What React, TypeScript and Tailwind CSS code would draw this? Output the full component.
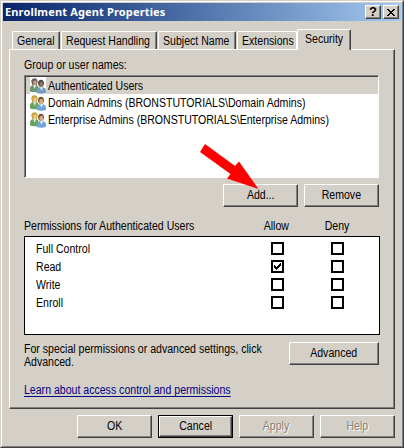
import type { ReactNode } from "react";

// Narrow interface lettering, squeezed from either the left edge or the middle.
function Text({ children, centered = false }: { children: ReactNode; centered?: boolean }) {
  return <span className={`inline-block scale-x-[.88] whitespace-nowrap ${centered ? "origin-center" : "origin-left"}`}>{children}</span>;
}

function Users({ gray = false }: { gray?: boolean }) {
  return (
    <svg width="16" height="17" viewBox="0 -1 16 17" className="shrink-0 bg-white">
      <path d="M0 13.5V10Q.3 7.4 3 7h3q2.3.6 2.6 3v3.5q-4 1.5-8.6 0Z" fill={gray ? "#6a9670" : "#65a35a"} />
      <path d="m3.2 7 1.5 4L6 7Z" fill="#eef3df" />
      <path d="M1.3 3.8Q1.3.4 4.6.2q3.2.2 3 4L6.8 7H2.3Z" fill={gray ? "#6d6462" : "#c5a43c"} />
      <ellipse cx="5" cy="4.8" rx="1.7" ry="2.4" fill={gray ? "#c59b88" : "#efc590"} />
      <path d="M6.5 15v-2.5Q7 9.6 9.3 9.3h4q2.3.5 2.6 3V15q-4.7 1.4-9.4 0Z" fill={gray ? "#7499c2" : "#72a4d6"} />
      <path d="m10 9.3 1.5 3.5L13 9.3Z" fill="#e9f3fa" />
      <ellipse cx="11" cy="5.3" rx="2.9" ry="3.5" fill={gray ? "#4c4848" : "#6d5434"} />
      <ellipse cx="11.3" cy="6.4" rx="2" ry="2.6" fill={gray ? "#8d7468" : "#dfaa82"} />
    </svg>
  );
}

function Button({ children, className = "", disabled = false }: { children: ReactNode; className?: string; disabled?: boolean }) {
  return (
    <button
      className={`flex shrink-0 items-center justify-center border border-t-white border-l-white border-r-[#404040] border-b-[#404040] pb-px shadow-[inset_-1px_-1px_0_#808080] ${disabled ? "text-[#85827c] [text-shadow:1px_1px_0_#fff]" : ""} ${className}`}
    >
      <Text centered>{children}</Text>
    </button>
  );
}

function Tab({ children, className }: { children: ReactNode; className: string }) {
  return (
    <div className={`shrink-0 rounded-t-[2px] border-t border-r border-l border-t-white border-l-white pt-px pl-1 leading-[17px] ${className}`}>
      <Text>{children}</Text>
    </div>
  );
}

function Check({ checked = false }: { checked?: boolean }) {
  return (
    <span className="block h-[13px] w-[13px] border-2 border-black bg-white">
      {checked && (
        <svg width="9" height="9" viewBox="0 0 9 9" className="block" shapeRendering="crispEdges">
          <path d="M1 3h1v1h1v1h1V4h1V3h1V2h1V1h1v3H7v1H6v1H5v1H4v1H3V7H2V6H1Z" fill="#000" />
        </svg>
      )}
    </span>
  );
}

const members = [
  "Authenticated Users",
  "Domain Admins (BRONSTUTORIALS\\Domain Admins)",
  "Enterprise Admins (BRONSTUTORIALS\\Enterprise Admins)",
];

const tabEdge = "h-[18px] border-r-[#404040] shadow-[inset_-1px_0_0_#808080]";

export default function App() {
  return (
    <div className="h-[448px] w-[404px] overflow-hidden border border-t-[#d4d0c8] border-r-[#404040] border-b-[#404040] border-l-[#d4d0c8] bg-[#d4d0c8] font-['Liberation_Sans',Arial,sans-serif] text-[12px] text-black">
      <div className="flex h-[446px] flex-col border border-t-white border-r-[#808080] border-b-[#808080] border-l-white pt-px pl-px">
        <header className="flex h-[18px] w-[398px] shrink-0 items-center bg-linear-to-r from-[#0a246a] to-[#a6caf0] pr-[2px] pl-[2px]">
          <h1 className="flex-1 font-['Noto_Sans','Open_Sans',sans-serif] text-[11px] leading-[18px] font-bold tracking-[0.15px] text-white">Enrollment Agent Properties</h1>
          <button className="flex h-[14px] w-4 items-center justify-center border border-t-white border-l-white border-r-[#404040] border-b-[#404040] bg-[#d4d0c8] text-[13px] font-bold shadow-[inset_-1px_-1px_0_#808080]">?</button>
          <button className="ml-[2px] flex h-[14px] w-4 items-center justify-center border border-t-white border-l-white border-r-[#404040] border-b-[#404040] bg-[#d4d0c8] shadow-[inset_-1px_-1px_0_#808080]">
            <svg width="8" height="7" viewBox="0 0 8 7" shapeRendering="crispEdges">
              <path d="M0 0h2v1h1v1h2V1h1V0h2v1H7v1H6v1H5v1h1v1h1v1h1v1H6V6H5V5H3v1H2v1H0V6h1V5h1V4h1V3H2V2H1V1H0Z" fill="#000" />
            </svg>
          </button>
        </header>
        <nav className="mt-2 ml-[9px] flex h-5 shrink-0 items-end">
          <Tab className={`w-[48px] ${tabEdge}`}>General</Tab>
          <Tab className={`ml-px w-[96px] ${tabEdge}`}>Request Handling</Tab>
          <Tab className={`ml-px w-[78px] ${tabEdge}`}>Subject Name</Tab>
          <Tab className="ml-px h-[18px] w-[60px] border-r-white">Extensions</Tab>
          <Tab className="z-10 -mb-px h-[21px] w-[54px] border-r-[#404040] bg-[#d4d0c8] pl-[7px] shadow-[inset_-1px_0_0_#808080]">Security</Tab>
        </nav>
        <main className="ml-[6px] flex h-[360px] w-[386px] shrink-0 flex-col border border-t-white border-r-[#404040] border-b-[#404040] border-l-white pt-[6px] pl-[14px] shadow-[inset_-1px_-1px_0_#808080]">
          <div className="h-[19px] leading-[19px]"><Text>Group or user names:</Text></div>
          <div className="h-[103px] w-[355px] border border-t-[#808080] border-r-white border-b-white border-l-[#808080] bg-white">
            <div className="h-full border-t border-l border-[#404040]">
              {members.map((name, index) => (
                <div key={name} className={`flex h-[17px] items-center pl-1 leading-[17px] ${index === 0 ? "bg-[#d4d0c8]" : ""}`}>
                  <Users gray={index === 0} />
                  <span className="ml-[2px] pt-[2px]"><Text>{name}</Text></span>
                </div>
              ))}
            </div>
          </div>
          <div className="mt-[6px] flex pl-[199px]">
            <Button className="h-[23px] w-[75px]">Add...</Button>
            <Button className="ml-[6px] h-[23px] w-[75px]">Remove</Button>
          </div>
          <div className="mt-[9px] flex h-[20px] leading-[20px]">
            <span className="w-[222px]"><Text>Permissions for Authenticated Users</Text></span>
            <span className="w-[60px] text-center"><Text centered>Allow</Text></span>
            <span className="w-[62px] text-center"><Text centered>Deny</Text></span>
          </div>
          <div className="h-[99px] w-[356px] border border-black bg-white pt-[3px] pl-[11px]">
            {["Full Control", "Read", "Write", "Enroll"].map((name) => (
              <div key={name} className="flex h-[18px] items-start pt-[2px]">
                <span className="w-[235px] leading-[14px]"><Text>{name}</Text></span>
                <Check checked={name === "Read"} />
                <span className="ml-[47px]"><Check /></span>
              </div>
            ))}
          </div>
          <div className="mt-[7px] flex w-[355px]">
            <p className="w-[265px] pt-[1px] leading-[13px]"><Text>For special permissions or advanced settings, click<br />Advanced.</Text></p>
            <Button className="h-[23px] w-[90px]">Advanced</Button>
          </div>
          <a className="mt-[14px] self-start leading-[14px] text-[#000080]"><span className="inline-block origin-left scale-x-[.88] whitespace-nowrap underline underline-offset-[2px]">Learn about access control and permissions</span></a>
        </main>
        <footer className="mt-[6px] ml-[74px] flex gap-[6px]">
          <Button className="h-[23px] w-[75px]">OK</Button>
          <span className="flex h-[23px] w-[75px] border border-black"><Button className="h-[21px] w-[73px]">Cancel</Button></span>
          <Button disabled className="h-[23px] w-[75px]">Apply</Button>
          <Button disabled className="h-[23px] w-[75px]">Help</Button>
        </footer>
      </div>
      <svg className="pointer-events-none absolute top-[140px] left-[198px]" width="65" height="52" viewBox="0 0 65 52">
        <path d="M7 4 37 26l4-4.5L60.5 49 29 38.5l3.5-4.5L2 12Z" fill="#f00" />
      </svg>
    </div>
  );
}
